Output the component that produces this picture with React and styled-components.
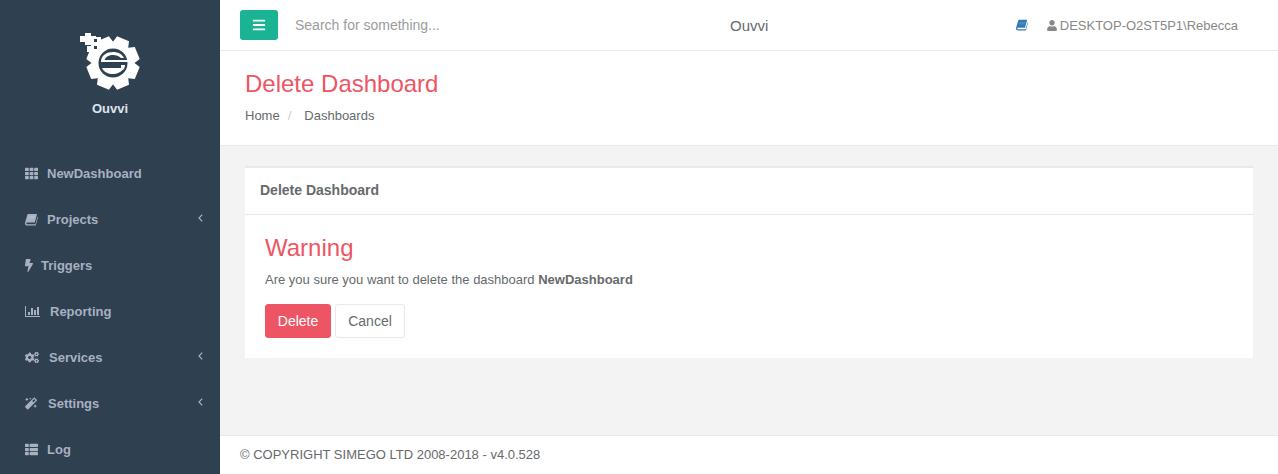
import React from 'react'
import styled, { createGlobalStyle } from 'styled-components'
import { FaTh, FaBolt, FaCogs, FaMagic, FaThList, FaUser, FaBars } from 'react-icons/fa'

const GlobalStyle = createGlobalStyle`
html, body { margin: 0; padding: 0; height: 100%; }
body {
  font-family: "Liberation Sans", Arial, sans-serif;
  font-size: 13px;
  color: #676a6c;
  overflow: hidden;
}
#root { height: 100%; }
`

// the slanted book of the old icon font, not in the icon package
const BookGlyph = ({ className }) => (
    <svg className={className} viewBox="0 0 14 14">
        <path fill="currentColor" d="M3.4 1H13l-2.5 9.2H2.2C1.6 10.2 1.5 11 1.5 11.3c0 .5.4.8 1 .8h8.7l2.3-8.2.5.6-2.3 8.4c-.1.4-.4.6-.8.6H2.4C1 13.5 0 12.5 0 11.2c0-.4.1-.9.2-1.3L2.6 1.7C2.7 1.3 3 1 3.4 1z" />
        <path fill="#fff" fillOpacity=".25" d="M4.5 3.4h6l-.2.8h-6zM4 5.2h6l-.2.8h-6z" />
    </svg>
)

const ChartGlyph = ({ className }) => (
    <svg className={className} viewBox="0 0 15 11">
        <path fill="currentColor" d="M0 0h1v10h14v1H0zM3 6h2v3H3zM6 2h2v7H6zM9 4h2v5H9zM12 1h2v8h-2z" />
    </svg>
)

const navItems = [
    { label: 'NewDashboard', icon: FaTh, width: 13, gap: 9 },
    { label: 'Projects', icon: BookGlyph, width: 13, gap: 9, arrow: true },
    { label: 'Triggers', icon: FaBolt, width: 8, gap: 8 },
    { label: 'Reporting', icon: ChartGlyph, width: 15, gap: 10 },
    { label: 'Services', icon: FaCogs, width: 14, gap: 10, arrow: true },
    { label: 'Settings', icon: FaMagic, width: 12, gap: 11, arrow: true },
    { label: 'Log', icon: FaThList, width: 13, gap: 9 },
]

// gear outline with 8 teeth, the points are worked out once at load
const gearPoints = () => {
    const pts = []
    const cx = 34, cy = 32
    for (let i = 0; i < 8; i++) {
        const a = (i * 45 + 22.5) * Math.PI / 180
        const add = (off, r) => pts.push((cx + Math.cos(a + off) * r).toFixed(1) + ',' + (cy + Math.sin(a + off) * r).toFixed(1))
        add(-0.39, 21.5)
        add(-0.24, 27)
        add(0.24, 27)
        add(0.39, 21.5)
    }
    return pts.join(' ')
}

const Logo = () => (
    <svg width="64" height="62" viewBox="0 0 64 62">
        <polygon points={gearPoints()} fill="#fff" />
        <circle cx="34" cy="32" r="14.5" fill="#2f4050" />
        <path d="M22 31 C22 24 28 21 34 21 C39 21 43 23 45 27 L42 27 C40 25 37 24 34 24 C29 24 26 26 25 31 Z" fill="#fff" />
        <path d="M25 29 H49 V31 H25 Z" fill="#fff" />
        <path d="M23 37 H44 V38.5 C42 41 38 43 34 43 C29 43 25 41 23 37 Z" fill="#fff" />
        <path d="M42 34 H46 C46 36 45 38 44 39 H42 Z" fill="#fff" />
        <g fill="#fff">
            <rect x="1" y="5" width="6" height="6" />
            <rect x="6" y="2" width="6" height="6" />
            <rect x="6" y="8" width="6" height="6" />
            <rect x="11" y="5" width="6" height="6" />
            <rect x="12" y="6" width="10" height="14" />
            <rect x="8" y="15" width="6" height="6" />
        </g>
        <g fill="#2f4050">
            <rect x="15" y="8" width="3" height="3" />
            <rect x="15" y="15" width="3" height="3" />
        </g>
    </svg>
)

const App = () => {
    return (
        <Layout>
            <GlobalStyle />
            <Sidebar>
                <Brand>
                    <Logo />
                    <BrandName>Ouvvi</BrandName>
                </Brand>
                <Nav>
                    {navItems.map(item => (
                        <NavItem key={item.label} $gap={item.gap}>
                            <NavIcon as={item.icon} $width={item.width} />
                            <span>{item.label}</span>
                            {item.arrow && (
                                <Arrow viewBox="0 0 5 8">
                                    <polyline points="4.2,0.6 1,4 4.2,7.4" />
                                </Arrow>
                            )}
                        </NavItem>
                    ))}
                </Nav>
            </Sidebar>
            <Main>
                <Topbar>
                    <MenuButton><FaBars /></MenuButton>
                    <Search>Search for something...</Search>
                    <TopTitle>Ouvvi</TopTitle>
                    <UserArea>
                        <BookIcon />
                        <UserIcon />
                        <span>DESKTOP-O2ST5P1\Rebecca</span>
                    </UserArea>
                </Topbar>
                <Heading>
                    <HeadingTitle>Delete Dashboard</HeadingTitle>
                    <Crumbs>
                        <span>Home</span>
                        <CrumbSep>/</CrumbSep>
                        <span>Dashboards</span>
                    </Crumbs>
                </Heading>
                <Content>
                    <Card>
                        <CardTitle>Delete Dashboard</CardTitle>
                        <CardBody>
                            <Warning>Warning</Warning>
                            <Message>Are you sure you want to delete the dashboard <b>NewDashboard</b></Message>
                            <Buttons>
                                <DangerButton>Delete</DangerButton>
                                <CancelButton>Cancel</CancelButton>
                            </Buttons>
                        </CardBody>
                    </Card>
                </Content>
                <Footer>© COPYRIGHT SIMEGO LTD 2008-2018 - v4.0.528</Footer>
            </Main>
        </Layout>
    )
}

export default App

const Layout = styled.div`
display: flex;
height: 474px;
`
const Sidebar = styled.aside`
width: 220px;
flex-shrink: 0;
background-color: #2f4050;
`
const Brand = styled.div`
height: 150px;
box-sizing: border-box;
padding: 31px 0 0 2px;
display: flex;
flex-direction: column;
align-items: center;
`
const BrandName = styled.div`
margin: 8px 0 0 -2px;
color: #dfe4ed;
font-weight: 700;
font-size: 13px;
line-height: 16px;
`
const Nav = styled.nav`
display: flex;
flex-direction: column;
`
const NavItem = styled.div`
height: 46px;
padding: 0 17px 0 25px;
display: flex;
align-items: center;
gap: ${props => props.$gap}px;
color: #a7b1c2;
font-weight: 700;
font-size: 13px;
`
const NavIcon = styled.svg`
width: ${props => props.$width}px;
height: 13px;
flex-shrink: 0;
`
const Arrow = styled.svg`
margin-left: auto;
margin-top: -3px;
width: 5px;
height: 8px;
fill: none;
stroke: currentColor;
stroke-width: 1.2;
`
const Main = styled.div`
flex: 1;
min-width: 0;
display: flex;
flex-direction: column;
background-color: #f3f3f4;
`
const Topbar = styled.header`
height: 51px;
box-sizing: border-box;
border-bottom: 1px solid #e7eaec;
background-color: #fff;
padding: 0 40px 0 20px;
display: flex;
align-items: center;
position: relative;
`
const MenuButton = styled.button`
width: 38px;
height: 30px;
padding: 0;
border: 0;
border-radius: 3px;
background-color: #1ab394;
color: #fff;
font-size: 14px;
display: flex;
align-items: center;
justify-content: center;
`
const Search = styled.div`
margin-left: 17px;
font-size: 14px;
color: #999c9e;
`
const TopTitle = styled.div`
position: absolute;
left: 510px;
font-size: 15px;
color: #676a6c;
`
const UserArea = styled.div`
margin-left: auto;
display: flex;
align-items: center;
font-size: 13px;
color: #888;
`
const BookIcon = styled(BookGlyph)`
color: #337ab7;
width: 12px;
height: 12px;
margin-right: 19px;
`
const UserIcon = styled(FaUser)`
color: #888;
width: 10px;
height: 11px;
margin-right: 3px;
`
const Heading = styled.section`
height: 95px;
box-sizing: border-box;
background-color: #fff;
border-bottom: 1px solid #e7eaec;
padding: 20px 25px 0;
`
const HeadingTitle = styled.h2`
margin: 0;
font-size: 24px;
font-weight: 400;
line-height: 26px;
color: #ed5565;
`
const Crumbs = styled.div`
margin-top: 10px;
font-size: 13px;
line-height: 17px;
color: #676a6c;
`
const CrumbSep = styled.span`
margin: 0 13px 0 8px;
color: #ccc;
`
const Content = styled.main`
flex: 1;
padding: 20px 25px 0;
`
const Card = styled.div`
background-color: #fff;
border-top: 2px solid #e7eaec;
`
const CardTitle = styled.div`
height: 47px;
box-sizing: border-box;
border-bottom: 1px solid #e7eaec;
padding: 14px 15px 0;
font-size: 14px;
font-weight: 700;
line-height: 16px;
color: #676a6c;
`
const CardBody = styled.div`
height: 143px;
box-sizing: border-box;
padding: 20px 20px 0;
`
const Warning = styled.h2`
margin: 0;
font-size: 24px;
font-weight: 400;
line-height: 26px;
color: #ed5565;
`
const Message = styled.p`
margin: 10px 0 0;
font-size: 13px;
line-height: 17px;
color: #676a6c;
`
const Buttons = styled.div`
margin-top: 16px;
display: flex;
gap: 4px;
`
const DangerButton = styled.button`
width: 66px;
height: 34px;
padding: 0;
border: 1px solid #ed5565;
border-radius: 3px;
background-color: #ed5565;
color: #fff;
font: 14px "Liberation Sans", Arial, sans-serif;
`
const CancelButton = styled.button`
width: 70px;
height: 34px;
padding: 0;
border: 1px solid #e7eaec;
border-radius: 3px;
background-color: #fff;
color: #676a6c;
font: 14px "Liberation Sans", Arial, sans-serif;
`
const Footer = styled.footer`
height: 39px;
box-sizing: border-box;
border-top: 1px solid #e7eaec;
background-color: #fff;
padding: 11px 20px 0;
font-size: 13px;
line-height: 16px;
color: #676a6c;
`
